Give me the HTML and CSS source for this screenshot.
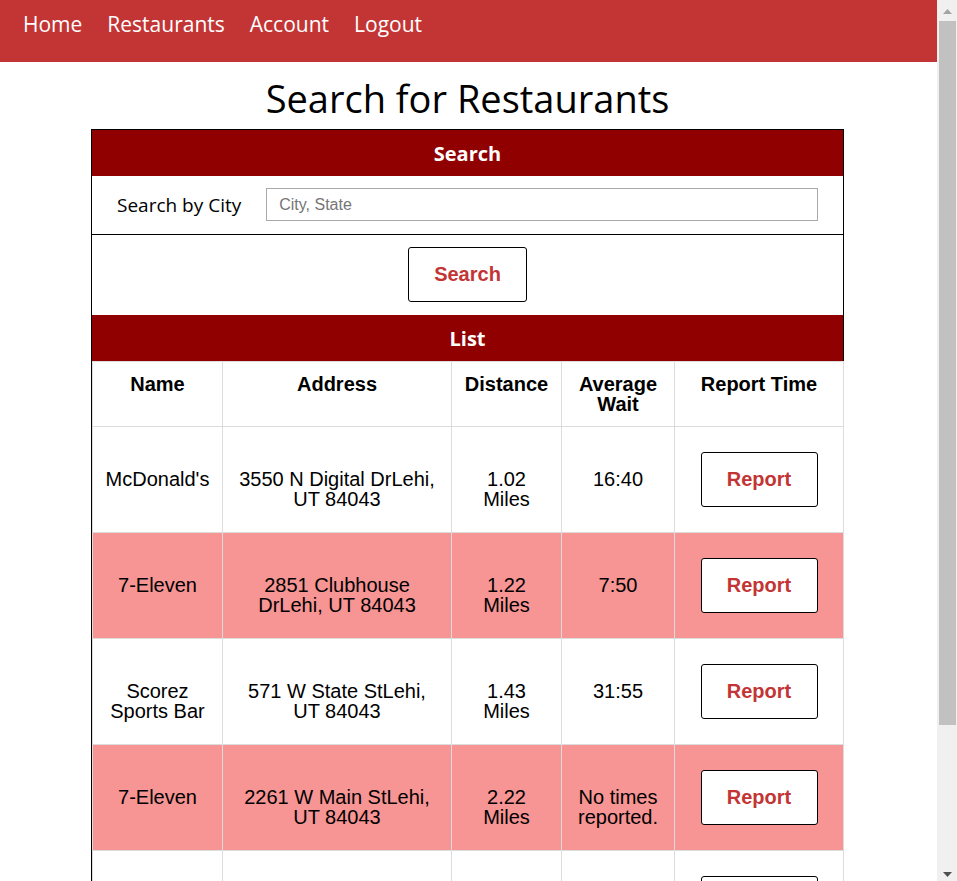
FILE: index.html
```html
<!DOCTYPE html>
<html lang="en">
<head>
<meta charset="utf-8">
<title>Search for Restaurants</title>
<link rel="stylesheet" href="styles.css">
</head>
<body>
<nav class="navbar">
  <a href="#" class="nav-link">Home</a>
  <a href="#" class="nav-link">Restaurants</a>
  <a href="#" class="nav-link">Account</a>
  <a href="#" class="nav-link">Logout</a>
</nav>
<main class="main">
  <h1 class="page-title">Search for Restaurants</h1>
  <div class="panel">
    <div class="section-title">Search</div>
    <div class="search-row">
      <label class="search-label" for="city">Search by City</label>
      <input class="search-input" id="city" type="text" placeholder="City, State">
    </div>
    <div class="button-row">
      <button class="btn btn-search">Search</button>
    </div>
    <div class="section-title">List</div>
    <table class="list">
      <colgroup>
        <col class="c-name"><col class="c-addr"><col class="c-dist"><col class="c-wait"><col class="c-report">
      </colgroup>
      <thead>
        <tr><th>Name</th><th>Address</th><th>Distance</th><th>Average Wait</th><th>Report Time</th></tr>
      </thead>
      <tbody>
        <tr><td>McDonald's</td><td>3550 N Digital DrLehi, UT 84043</td><td>1.02 Miles</td><td>16:40</td><td><button class="btn btn-report">Report</button></td></tr>
        <tr class="alt"><td>7-Eleven</td><td>2851 Clubhouse DrLehi, UT 84043</td><td>1.22 Miles</td><td>7:50</td><td><button class="btn btn-report">Report</button></td></tr>
        <tr><td>Scorez Sports Bar</td><td>571 W State StLehi, UT 84043</td><td>1.43 Miles</td><td>31:55</td><td><button class="btn btn-report">Report</button></td></tr>
        <tr class="alt"><td>7-Eleven</td><td>2261 W Main StLehi, UT 84043</td><td>2.22 Miles</td><td>No times reported.</td><td><button class="btn btn-report">Report</button></td></tr>
        <tr><td>Subway</td><td>1500 N Main StLehi, UT 84043</td><td>2.41 Miles</td><td>No times reported.</td><td><button class="btn btn-report">Report</button></td></tr>
        <tr class="alt"><td>Costa Vida</td><td>3600 N Thanksgiving WayLehi, UT 84043</td><td>2.68 Miles</td><td>12:05</td><td><button class="btn btn-report">Report</button></td></tr>
      </tbody>
    </table>
  </div>
</main>
<div class="scrollbar" aria-hidden="true">
  <svg class="sb-arrow sb-up" width="9" height="5" viewBox="0 0 9 5"><path d="M4.5 0 L9 5 L0 5 Z" fill="#a3a3a3"/></svg>
  <div class="sb-thumb"></div>
  <svg class="sb-arrow sb-down" width="9" height="5" viewBox="0 0 9 5"><path d="M0 0 L9 0 L4.5 5 Z" fill="#505050"/></svg>
</div>
</body>
</html>
```

FILE: styles.css
```css
html, body {
  margin: 0;
  padding: 0;
  background: #ffffff;
}

body {
  font-family: "Open Sans", "Noto Sans", sans-serif;
  color: #000;
  margin-right: 20px;
  padding-bottom: 8px;
}

/* browser scrollbar, as shown in the reference */
.scrollbar {
  position: fixed;
  top: 0;
  right: 0;
  width: 20px;
  height: 100vh;
  background: #f0f0f0;
}

.sb-arrow {
  position: absolute;
  left: 6px;
  display: block;
}

.sb-up {
  top: 9px;
}

.sb-down {
  bottom: 4px;
}

.sb-thumb {
  position: absolute;
  top: 21px;
  left: 2px;
  width: 17px;
  height: 704px;
  background: #c1c1c1;
}

.navbar {
  display: flex;
  align-items: flex-start;
  gap: 25px;
  height: 62px;
  box-sizing: border-box;
  padding: 9px 0 0 23px;
  background: #c33535;
}

.nav-link {
  color: #ffffff;
  text-decoration: none;
  font-size: 21px;
  line-height: 30px;
}

.main {
  margin-right: 2px;
}

.page-title {
  margin: 10px 0 5px;
  font-size: 38px;
  font-weight: 400;
  line-height: 52px;
  text-align: center;
}

.panel {
  width: 753px;
  margin: 0 auto;
  box-sizing: border-box;
  border: 1px solid #000;
}

.section-title {
  height: 46px;
  background: #910000;
  color: #fff;
  font-weight: 700;
  font-size: 20px;
  line-height: 47px;
  text-align: center;
}

.search-row {
  display: flex;
  align-items: center;
  gap: 25px;
  padding: 12px 25px 13px;
  border-bottom: 1px solid #000;
}

.search-label {
  font-size: 19px;
  line-height: 26px;
}

.search-input {
  flex: 1;
  height: 33px;
  box-sizing: border-box;
  border: 1px solid #aaa;
  border-radius: 0;
  padding: 0 12px;
  font-family: "Liberation Sans", Arial, sans-serif;
  font-size: 16px;
  outline: none;
}

.search-input::placeholder {
  color: #757575;
}

.button-row {
  display: flex;
  justify-content: center;
  padding: 12px 0 13px;
}

.btn {
  background: #fff;
  border: 1px solid #000;
  border-radius: 3px;
  color: #c33535;
  font-family: "Liberation Sans", Arial, sans-serif;
  font-weight: 700;
  font-size: 20px;
  padding: 0;
  cursor: pointer;
}

.btn-search {
  width: 119px;
  height: 55px;
}

.btn-report {
  display: inline-block;
  width: 117px;
  height: 55px;
  margin: 13px 0;
}

.list {
  width: 100%;
  table-layout: fixed;
  border-collapse: collapse;
  font-family: "Liberation Sans", Arial, sans-serif;
  font-size: 20px;
  line-height: 20px;
}

.c-name { width: 130px; }
.c-addr { width: 229px; }
.c-dist { width: 110px; }
.c-wait { width: 113px; }
.c-report { width: 169px; }

.list th,
.list td {
  border: 1px solid #dcdcdc;
  text-align: center;
  padding: 12px 10px;
}

.list th {
  vertical-align: top;
  font-weight: 700;
  height: 40px;
}

.list td {
  vertical-align: baseline;
}

.list tr.alt td {
  background: #f79494;
}
```
